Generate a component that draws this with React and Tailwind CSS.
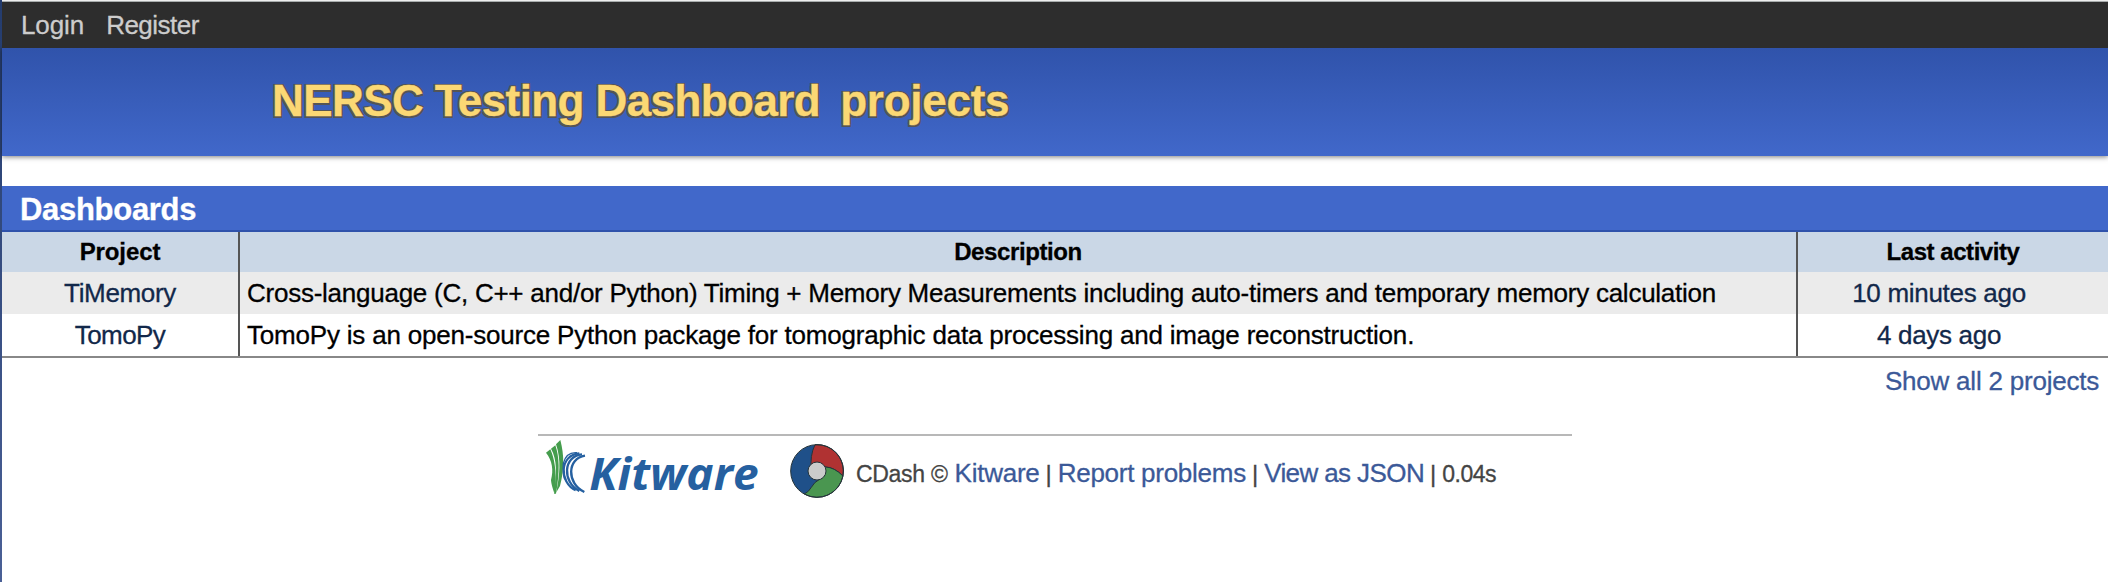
function KitwareLogo() {
  return (
    <svg className="h-[67px] w-[218px] shrink-0" viewBox="48 57 654 201" role="img" aria-label="Kitware">
      <g fill="#459d4d">
        <path d="M48 98 L61 88 C74 118 79 150 77 212 L72 217 C66 200 63 185 63 180 C71 150 67 122 48 98Z" />
        <path d="M63 86 L76 76 C88 110 90 155 78 221 L72 221 C80 160 82 120 63 86Z" />
        <path d="M78 73 L91 60 C103 105 103 150 90 198 L79 217 C89 165 94 120 78 73Z" />
      </g>
      <g fill="none" stroke="#2560a0">
        <path d="M141 98 C118 96 105 110 100 130 C99 150 100 165 104 178" strokeWidth="4" />
        <path d="M148 100 C88 104 87 188 137 211" strokeWidth="6.5" />
        <path d="M156 103 C99 108 96 186 148 213" strokeWidth="7" />
        <path d="M165 107 C111 115 109 190 163 216" strokeWidth="7" />
      </g>
      <text
        x="178"
        y="209"
        textLength="508"
        lengthAdjust="spacingAndGlyphs"
        fill="#2560a0"
        className="font-['Open_Sans',sans-serif] text-[134px] font-bold italic [-webkit-text-stroke:0px]"
      >
        Kitware
      </text>
    </svg>
  );
}

function CDashLogo() {
  return (
    <svg className="size-[54px] shrink-0" viewBox="30 18 162 162" role="img" aria-label="CDash">
      <circle cx="111" cy="99" r="79" fill="#1f5089" />
      <g stroke="#26343a" strokeWidth="3">
        <path d="M105 20 Q89 52 94 99 L111 99 L137 87 Q163 88 189 114 A79 79 0 0 0 105 20Z" fill="#b03232" />
        <path d="M137 87 Q163 88 189 114 A79 79 0 0 1 73 168 Q86 162 94 148 Q103 132 117 125 L111 99Z" fill="#4a9650" />
        <circle cx="111" cy="99" r="79" fill="none" />
        <circle cx="111" cy="99" r="27" fill="#cbcbcb" />
      </g>
    </svg>
  );
}

const projects = [
  {
    name: 'TiMemory',
    nameClass: 'tracking-[-0.35px]',
    description:
      'Cross-language (C, C++ and/or Python) Timing + Memory Measurements including auto-timers and temporary memory calculation',
    descriptionClass: 'tracking-[-0.25px]',
    activity: '10 minutes ago',
    rowClass: 'bg-[#ebebeb]',
  },
  {
    name: 'TomoPy',
    nameClass: 'tracking-[-0.6px]',
    description:
      'TomoPy is an open-source Python package for tomographic data processing and image reconstruction.',
    descriptionClass: 'tracking-[-0.2px]',
    activity: '4 days ago',
    rowClass: 'bg-white',
  },
];

export default function App() {
  return (
    <div className="flex h-[582px] w-full overflow-hidden bg-white font-['Liberation_Sans',Arial,sans-serif] text-[26px] text-black [-webkit-text-stroke:0.3px]">
      <div className="w-0.5 shrink-0 bg-linear-to-b from-[#243c6e] to-[#4a6096]" />
      <div className="flex min-w-0 flex-1 flex-col">
        <div className="h-0.5 shrink-0 border-b border-[#a8acac] bg-[#eeeeee]" />
        <nav className="relative z-10 flex h-[46px] shrink-0 items-center bg-[#2d2d2d] pl-[19px] text-[#cccccc]">
          <a className="mr-[22px] leading-[46px] tracking-[-0.1px]">Login</a>
          <a className="leading-[46px] tracking-[-0.5px]">Register</a>
        </nav>
        <header className="flex h-[108px] shrink-0 items-center bg-linear-to-b from-[#3053ab] to-[#4168ca] pb-0.5 pl-[270px] shadow-[0_1px_5px_rgba(0,0,0,0.5)]">
          <h1 className="flex text-[44px] leading-[52px] font-bold text-[#fbd874] [text-shadow:-1.5px_-1.5px_0_#555,1.5px_-1.5px_0_#555,-1.5px_1.5px_0_#555,1.5px_1.5px_0_#555,0_-1.5px_0_#555,0_1.5px_0_#555]">
            <span className="mr-[20px] tracking-[-0.58px]">NERSC Testing Dashboard</span>
            <span className="tracking-[-0.25px]">projects</span>
          </h1>
        </header>

        <main className="mt-[30px] flex flex-col">
          <h2 className="h-[46px] border-b-2 border-[#2f52ab] bg-[#4168ca] pt-0.5 pl-[18px] text-[31px] leading-[43px] font-bold tracking-[-0.3px] text-white">
            Dashboards
          </h2>
          <div className="border-b-2 border-[#888888] text-center">
            <div className="grid h-10 grid-cols-[238px_1558px_1fr] bg-[#cad7e6] text-[24px] leading-10 font-bold">
              <div className="border-r-2 border-[#555555] tracking-[-0.1px]">Project</div>
              <div className="border-r-2 border-[#555555] tracking-[-0.4px]">Description</div>
              <div className="tracking-[-0.45px]">Last activity</div>
            </div>
            {projects.map((p) => (
              <div
                key={p.name}
                className={`grid h-[42px] grid-cols-[238px_1558px_1fr] leading-[42px] whitespace-nowrap ${p.rowClass}`}
              >
                <a className={`border-r-2 border-[#555555] text-[#12284a] ${p.nameClass}`}>{p.name}</a>
                <div className={`border-r-2 border-[#555555] pl-[7px] text-left ${p.descriptionClass}`}>
                  {p.description}
                </div>
                <a className="pr-7 tracking-[-0.3px] text-[#12284a]">{p.activity}</a>
              </div>
            ))}
          </div>
          <a className="mt-[3px] self-end pr-[9px] leading-10 tracking-[-0.22px] text-[#3b5998]">
            Show all 2 projects
          </a>
        </main>

        <footer className="mt-[33px] ml-[536px] flex w-[1034px] items-start border-t-2 border-[#b8b8b8] pt-[3px] pl-2 whitespace-nowrap text-[#444444]">
          <KitwareLogo />
          <div className="mt-[5px] ml-[26px]">
            <CDashLogo />
          </div>
          <div className="mt-4 flex items-baseline pl-3 text-[23px] leading-[36px]">
            <span className="mr-[7px] tracking-[-0.3px]">CDash ©</span>
            <a className="text-[26px] tracking-[-0.25px] text-[#3b5998]">Kitware</a>
            <span className="mx-[6px] text-[24px]">|</span>
            <a className="text-[26px] tracking-[-0.27px] text-[#3b5998]">Report problems</a>
            <span className="mx-[6px] text-[24px]">|</span>
            <a className="text-[26px] tracking-[-0.6px] text-[#3b5998]">View as JSON</a>
            <span className="mx-[6px] text-[24px]">|</span>
            <span className="tracking-[-0.5px]">0.04s</span>
          </div>
        </footer>
      </div>
    </div>
  );
}
